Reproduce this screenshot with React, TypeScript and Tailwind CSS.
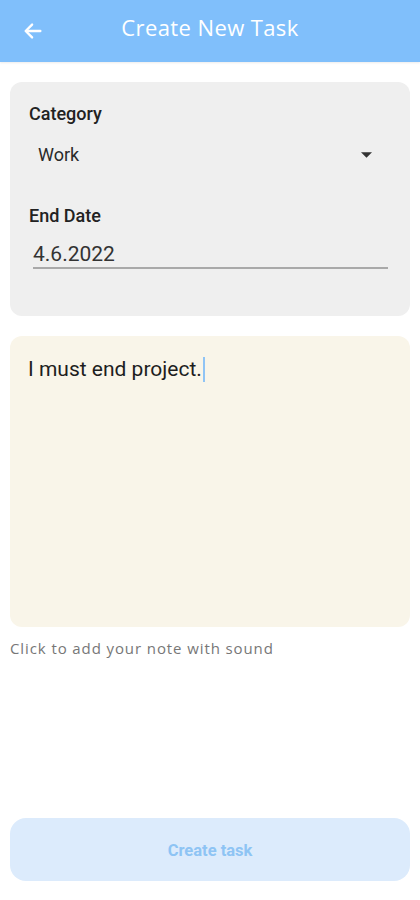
import React from "react";

export default function App() {
  return (
    <div className="w-[420px] h-[900px] bg-white flex flex-col" style={{ fontFamily: "Roboto, 'Liberation Sans', sans-serif" }}>
      <div className="h-[62px] bg-[#80bffb] flex items-center relative shadow-[0_1px_2px_rgba(0,0,0,0.08)]">
        <div className="pl-[22px] flex items-center">
          <svg width="22" height="22" viewBox="0 0 24 24" fill="none" stroke="white" strokeWidth="2.6" strokeLinecap="round" strokeLinejoin="round">
            <path d="M20 12H5" />
            <path d="M11 5l-7 7 7 7" />
          </svg>
        </div>
        <div className="absolute left-0 right-0 top-0 h-[55px] flex items-center justify-center text-white text-[22px] font-medium tracking-[0.4px] pointer-events-none" style={{ fontFamily: "'Open Sans', Lato, sans-serif" }}>
          Create New Task
        </div>
      </div>

      <div className="mt-[20px] mx-[10px] h-[234px] rounded-[12px] bg-[#efefef] px-[19px] pt-[20px] flex flex-col">
        <div className="text-[18px] font-medium text-[#222] leading-[24px]">Category</div>
        <div className="mt-[17px] flex items-center justify-between pl-[9px] pr-[19px]">
          <span className="text-[18px] text-[#2a2a2a] leading-[24px]">Work</span>
          <svg width="11" height="6" viewBox="0 0 10 5"><path d="M0 0l5 5 5-5z" fill="#333" /></svg>
        </div>
        <div className="mt-[37px] text-[18px] font-medium text-[#222] leading-[24px]">End Date</div>
        <div className="mt-[14px] ml-[4px] mr-[3px] border-b-[2px] border-[#a9a9a9]">
          <span className="block text-[21px] text-[#333] leading-[25px]">4.6.2022</span>
        </div>
      </div>

      <div className="mt-[20px] mx-[10px] h-[291px] rounded-[12px] bg-[#f9f5e9] px-[18px] pt-[19px]">
        <div className="text-[21px] text-[#1e1e1e] leading-[28px] flex items-center">
          I must end project.
          <span className="inline-block w-[2px] h-[25px] bg-[#90c4f5] ml-[1px]" />
        </div>
      </div>

      <div className="mt-[11px] ml-[10px] text-[15px] tracking-[0.9px] text-[#777] leading-[20px]" style={{ fontFamily: "'Open Sans', Lato, sans-serif" }}>
        Click to add your note with sound
      </div>

      <div className="flex-1" />

      <div className="mx-[10px] mb-[19px] h-[63px] rounded-[16px] bg-[#dcebfc] flex items-center justify-center">
        <span className="text-[16.5px] font-bold text-[#8ec4f4] pt-[3px]">Create task</span>
      </div>
    </div>
  );
}
